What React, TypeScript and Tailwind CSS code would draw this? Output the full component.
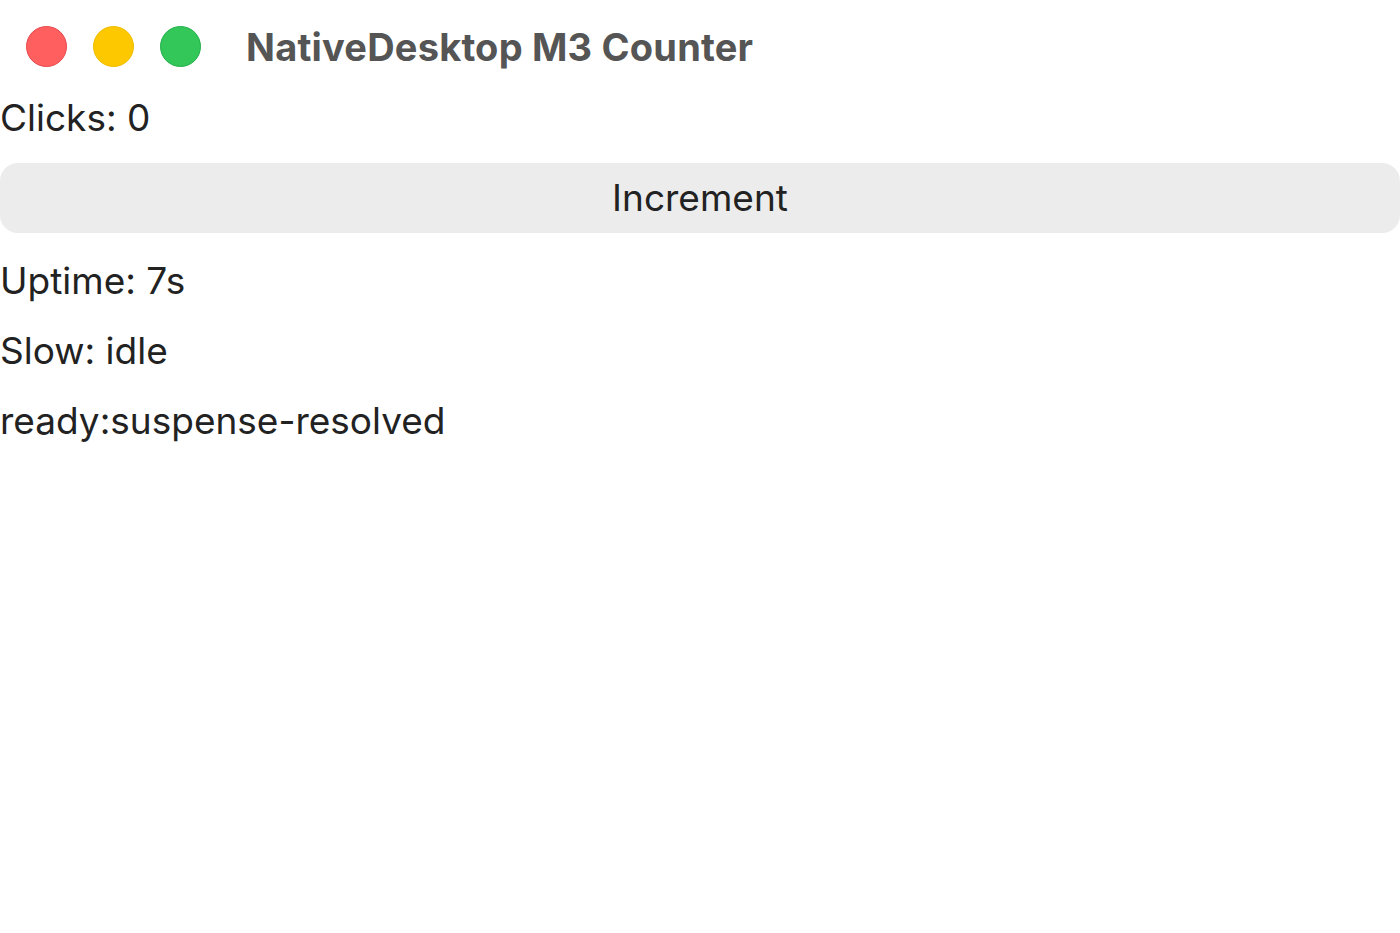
export default function App() {
  return (
    <div
      className="min-h-[933px] w-[1400px] bg-white text-[#222222]"
      style={{ fontFamily: "Inter, 'Liberation Sans', sans-serif" }}
    >
      {/* title bar */}
      <div className="flex h-[92px] items-center pl-[26px]">
        <div className="flex items-center gap-[26px]">
          <span className="h-[41px] w-[41px] rounded-full border border-[#e5484d] bg-[#ff5f5f]" />
          <span className="h-[41px] w-[41px] rounded-full border border-[#f0bc00] bg-[#fdc800]" />
          <span className="h-[41px] w-[41px] rounded-full border border-[#22b04a] bg-[#33c658]" />
        </div>
        <span className="ml-[45px] pt-[2px] text-[38px] font-bold tracking-[0.2px] text-[#555555]">
          NativeDesktop M3 Counter
        </span>
      </div>

      <div className="text-[37px] leading-[52px]">Clicks: 0</div>

      <button
        type="button"
        className="mt-[19px] flex h-[70px] w-full items-center justify-center rounded-[18px] bg-[#ececec] text-[37px]"
      >
        Increment
      </button>

      <div className="mt-[13px] text-[37px] leading-[70px]">
        <div>Uptime: 7s</div>
        <div>Slow: idle</div>
        <div>ready:suspense-resolved</div>
      </div>
    </div>
  );
}
